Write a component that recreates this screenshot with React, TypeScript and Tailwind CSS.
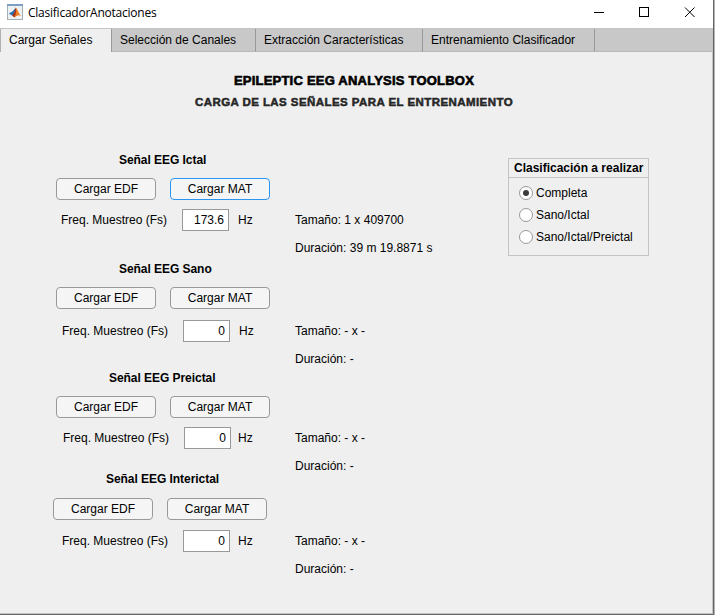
import React from "react";

type Section = {
  title: string;
  rate: string;
  size: string;
  duration: string;
  focused?: boolean;
  box: string;
  heading: string;
  buttons: string;
  freq: string;
  unit: string;
};

const sections: Section[] = [
  {
    title: "Señal EEG Ictal", rate: "173.6", size: "1 x 409700", duration: "39 m 19.8871 s", focused: true,
    box: "h-[109px]", heading: "pl-[119px]", buttons: "mt-[10px] pl-[56px]", freq: "mt-[9px] pl-[61px]", unit: "ml-[9px]",
  },
  {
    title: "Señal EEG Sano", rate: "0", size: "- x -", duration: "-",
    box: "h-[109px]", heading: "pl-[119px]", buttons: "mt-[10px] pl-[56px]", freq: "mt-[11px] pl-[62px]", unit: "ml-[9px]",
  },
  {
    title: "Señal EEG Preictal", rate: "0", size: "- x -", duration: "-",
    box: "h-[101px]", heading: "pl-[109px]", buttons: "mt-[10px] pl-[56px]", freq: "mt-[9px] pl-[63px]", unit: "ml-[7px]",
  },
  {
    title: "Señal EEG Interictal", rate: "0", size: "- x -", duration: "-",
    box: "h-[109px]", heading: "pl-[106px]", buttons: "mt-[11px] pl-[53px]", freq: "mt-[10px] pl-[62px]", unit: "ml-[8px]",
  },
];

function PushButton({ label, focused }: { label: string; focused?: boolean }) {
  return (
    <button
      className={`h-[22px] w-[100px] rounded-[4px] border bg-[#f5f5f5] text-center leading-[20px] ${
        focused ? "border-[#2a96f0]" : "border-[#999999]"
      }`}
    >
      {label}
    </button>
  );
}

function SignalSection({ s }: { s: Section }) {
  return (
    <section className={s.box}>
      <h2 className={`h-4 font-bold leading-4 tracking-[-0.05px] ${s.heading}`}>{s.title}</h2>
      <div className={`flex gap-[14px] ${s.buttons}`}>
        <PushButton label="Cargar EDF" />
        <PushButton label="Cargar MAT" focused={s.focused} />
      </div>
      <div className="flex">
        <div className={`flex h-[22px] w-[295px] shrink-0 leading-[22px] ${s.freq}`}>
          <span className="w-[121px]">Freq. Muestreo (Fs)</span>
          <input
            className="h-[22px] w-[47px] border border-[#999999] bg-white pr-[4px] text-right"
            defaultValue={s.rate}
          />
          <span className={s.unit}>Hz</span>
        </div>
        <div className={`leading-[22px] ${s.freq} !pl-0`}>
          <p>Tamaño: {s.size}</p>
          <p className="mt-[6px]">Duración: {s.duration}</p>
        </div>
      </div>
    </section>
  );
}

function Radio({ label, checked }: { label: string; checked?: boolean }) {
  return (
    <label className="flex h-[22px] items-center pl-[10px]">
      <span className="flex size-[14px] items-center justify-center rounded-full border border-[#999999] bg-white">
        {checked && <span className="size-[6px] rounded-full bg-[#3c3c3c]" />}
      </span>
      <span className="ml-[3px]">{label}</span>
    </label>
  );
}

function AppIcon() {
  return (
    <svg width="16" height="16" viewBox="0 0 16 16">
      <rect x=".5" y=".5" width="15" height="15" fill="#eef1f3" stroke="#a3adb6" />
      <rect x="0" y="0" width="16" height="2" fill="#7f9fc2" />
      <path d="M1.8 9.4 5.4 7.6 8.6 4 7.4 9.8 5 11.6Z" fill="#2a6fae" />
      <path d="M5 11.6 7 9 8.8 3.6 10.4 7 11.4 10.8 9.4 11 7.4 13.4Z" fill="#a8321a" />
      <path d="M8.8 3.6C10.4 5.2 11.6 9.6 14.4 12.2 12 10.6 10.3 11.4 7.4 13.4 9 10.5 9.6 7.4 8.8 3.6Z" fill="#f07c1e" />
    </svg>
  );
}

export default function App() {
  return (
    <div className="flex h-[615px] w-[715px] flex-col overflow-hidden border-r border-[#b4b4b4] bg-[#efefef] font-['Liberation_Sans',Arial,sans-serif] text-[12px] text-black">
      <div className="flex min-h-0 flex-1 flex-col border-b border-r border-[#666666]">
        <header className="flex h-[28px] shrink-0 bg-white">
          <div className="ml-[7px] mt-[4px]"><AppIcon /></div>
          <h1 className="ml-[5px] mt-[4px] font-['Open_Sans','Noto_Sans',sans-serif] text-[12px] leading-[18px] tracking-[-0.24px]">ClasificadorAnotaciones</h1>
          <svg className="ml-auto" width="122" height="28" viewBox="0 0 122 28" fill="none" stroke="#000" shapeRendering="crispEdges">
            <path d="M3 12.5H13M48.5 7.5H57.5V16.5H48.5Z" />
            <path d="M94 7.5 103.5 17M103.5 7.5 94 17" shapeRendering="auto" />
          </svg>
        </header>
        <div className="flex min-h-0 flex-1 flex-col border-b border-r border-[#c4c4c4]">
          <nav className="flex h-[24px] shrink-0 border-t border-[#c4c4c4] bg-[#c8c8c8] leading-[23px]">
            <div className="w-[112px] border-x border-l-[#b0b0b0] border-r-[#999999] bg-[#efefef] pl-[8px]">Cargar Señales</div>
            <div className="w-[144px] border-b border-r border-b-[#b8b8b8] border-r-[#999999] pl-[8px]">Selección de Canales</div>
            <div className="w-[167px] border-b border-r border-b-[#b8b8b8] border-r-[#999999] pl-[8px]">Extracción Características</div>
            <div className="w-[172px] border-b border-r border-b-[#b8b8b8] border-r-[#999999] pl-[8px]">Entrenamiento Clasificador</div>
            <div className="flex-1 border-b border-[#b8b8b8]" />
          </nav>
          <main className="pt-[20px]">
            <div className="flex h-[80px] w-[708px] flex-col items-center whitespace-nowrap font-bold">
              <p className="text-[13px] leading-[18px] tracking-[0.22px] [-webkit-text-stroke:0.6px_#000]">EPILEPTIC EEG ANALYSIS TOOLBOX</p>
              <p className="mt-[4px] text-[11.5px] leading-[16px] tracking-[0.43px] text-[#262626] [-webkit-text-stroke:0.5px_#262626]">CARGA DE LAS SEÑALES PARA EL ENTRENAMIENTO</p>
            </div>
            <div className="flex">
              <div className="w-[508px] shrink-0">
                {sections.map((s) => <SignalSection key={s.title} s={s} />)}
              </div>
              <fieldset className="mt-[6px] h-[98px] w-[141px] border border-[#c4c4c4]">
                <h3 className="h-[19px] border-b border-[#c4c4c4] pl-[5px] font-bold leading-[18px]">Clasificación a realizar</h3>
                <div className="pt-[4px]">
                  <Radio label="Completa" checked />
                  <Radio label="Sano/Ictal" />
                  <Radio label="Sano/Ictal/Preictal" />
                </div>
              </fieldset>
            </div>
          </main>
        </div>
      </div>
    </div>
  );
}
